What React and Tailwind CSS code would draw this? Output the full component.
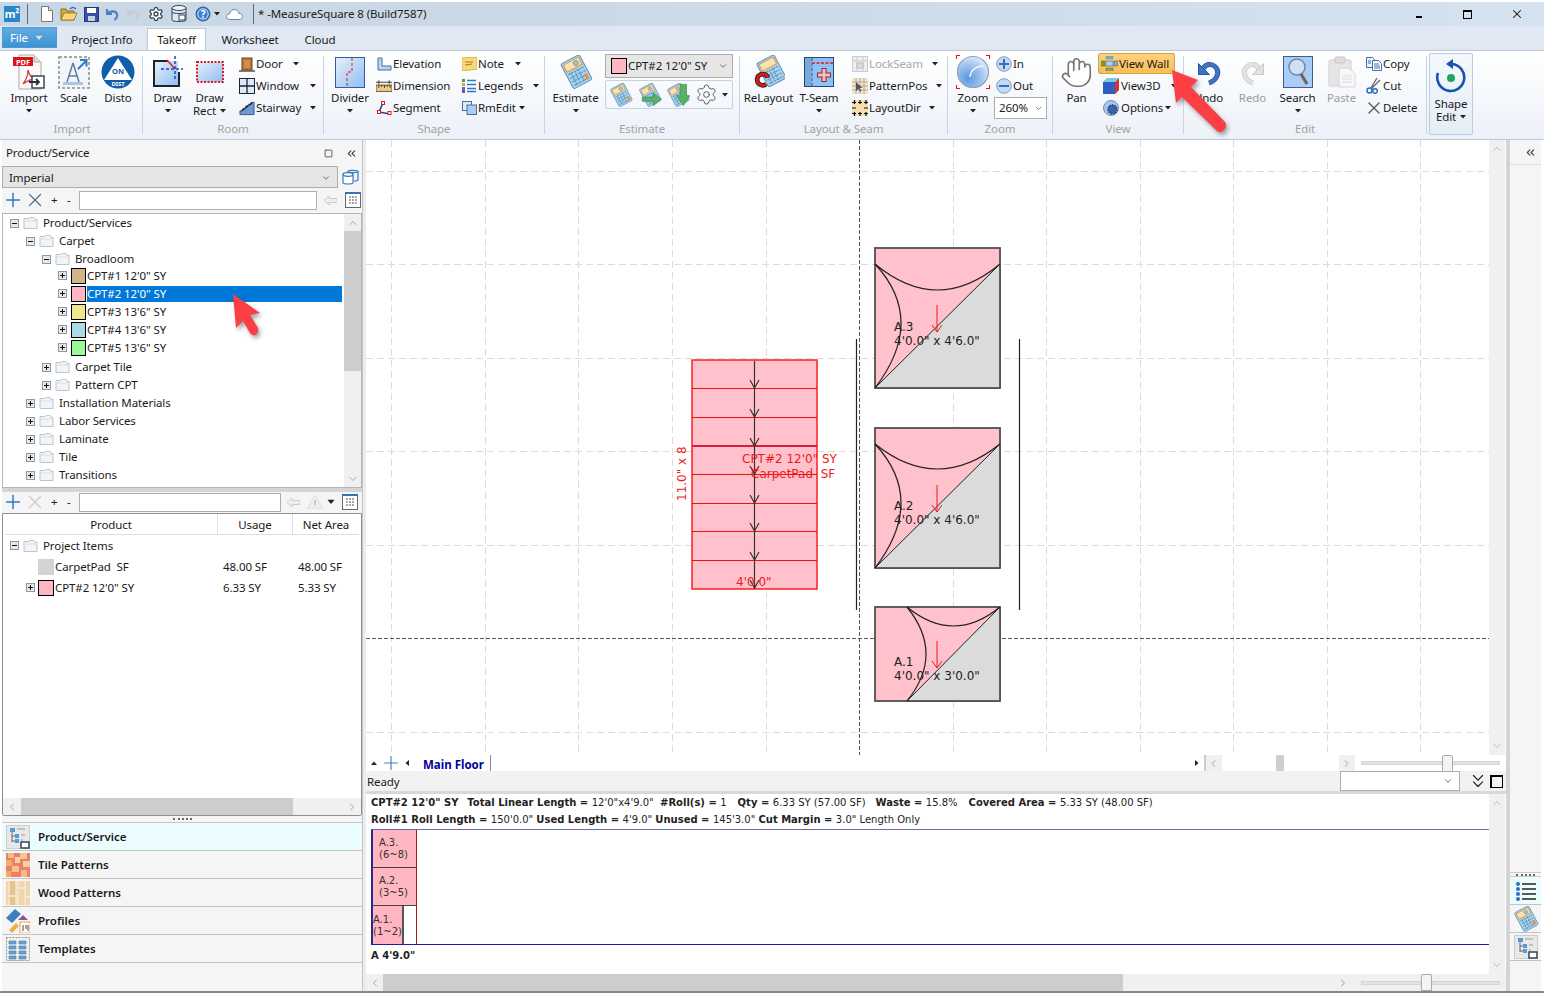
import { ChevronUp, ChevronDown, ChevronLeft, ChevronRight, ChevronsLeft, ChevronsDown, Hand, Plus, X, Square, Settings } from "lucide-react";

const Caret = ({ className = "" }) => (
  <svg width="6" height="4" viewBox="0 0 6 4" className={className}><path d="M0 0h6L3 3.500z" fill="#222" /></svg>
);

/* ---- small drawings for the quick access bar ---- */
const NewDoc = () => (
  <svg width="14" height="16" viewBox="0 0 14 16"><path d="M1.500.500h7l4 4v11h-11z" fill="#fff" stroke="#777" /><path d="M8.500.500v4h4" fill="#ddd" stroke="#777" /></svg>
);
const OpenFolder = () => (
  <svg width="18" height="16" viewBox="0 0 18 16"><path d="M1 3h5l1 2h7v9H1z" fill="#d9a93f" stroke="#8a6a20" /><path d="M1 14l3-7h13l-3 7z" fill="#f6d87c" stroke="#a57f28" /><path d="M10 3c2-2 4-2 6 0" fill="none" stroke="#3a6fb5" strokeWidth="1.500" /></svg>
);
const Floppy = () => (
  <svg width="15" height="15" viewBox="0 0 15 15"><rect x=".5" y=".5" width="14" height="14" fill="#3a4fa5" stroke="#27367a" /><rect x="3" y="1" width="9" height="5" fill="#fff" /><rect x="4" y="9" width="7" height="5" fill="#c9d0e6" /></svg>
);
const SmallUndo = ({ c = "#4a7fc0" }) => (
  <svg width="14" height="14" viewBox="0 0 14 14"><path d="M2 2v5h5M2.500 7C5 3.500 10.500 3.500 12 7c.8 2.500-.5 4.500-2.500 6" fill="none" stroke={c} strokeWidth="2.200" /></svg>
);
const DbLock = () => (
  <svg width="16" height="18" viewBox="0 0 16 18"><path d="M1 3v12c0 2 14 2 14 0V3" fill="#dfe7f1" stroke="#345" /><ellipse cx="8" cy="3" rx="7" ry="2.500" fill="#eef3f8" stroke="#345" /><path d="M1 7c0 2 14 2 14 0" fill="none" stroke="#345" /><rect x="8" y="10" width="6" height="5" fill="#fff" stroke="#345" /></svg>
);
const Help = () => (
  <svg width="16" height="16" viewBox="0 0 16 16"><circle cx="8" cy="8" r="7" fill="#3f7fd0" stroke="#2a5a9e" /><circle cx="8" cy="8" r="5.200" fill="none" stroke="#cfe0f5" /><text x="8" y="11.500" textAnchor="middle" fontSize="10" fontWeight="700" fill="#fff">?</text></svg>
);
const Cloud = () => (
  <svg width="17" height="11" viewBox="0 0 17 11"><path d="M4 10.500C1.500 10.500.5 9 .5 7.500S2 5 3.500 5C4 2.500 6 .5 8.500.5S12.500 2 13 4.500c2 0 3.500 1.300 3.500 3s-1.500 3-3.500 3z" fill="#fff" stroke="#5d85ad" /></svg>
);

/* ---- ribbon drawings ---- */
const PdfImport = () => (
  <svg width="34" height="36" viewBox="0 0 34 36">
    <path d="M7 1h15l7 7v27H7z" fill="#fafafa" stroke="#aaa" />
    <path d="M22 1v7h7" fill="#ddd" stroke="#aaa" />
    <rect x="1" y="3" width="20" height="9" fill="#d9141b" />
    <text x="11" y="10.500" textAnchor="middle" fontSize="7.500" fontWeight="700" fill="#fff">PDF</text>
    <path d="M11 30c3-4 5-10 5-14 1 5 4 8 8 9-4 0-9 2-13 5z" fill="none" stroke="#d9433f" strokeWidth="1.300" />
    <rect x="20" y="22" width="12" height="12" fill="#fff" stroke="#445" strokeWidth="1.500" />
    <path d="M17 28h10M24 25l3 3-3 3" fill="none" stroke="#234" strokeWidth="1.800" />
  </svg>
);
const ScaleIcon = () => (
  <svg width="32" height="33" viewBox="0 0 32 33">
    <rect x="1" y="1" width="30" height="31" fill="#f2f6fb" stroke="#8b8b8b" strokeDasharray="3 2" strokeWidth="1.500" />
    <path d="M15 7l-6 19M15 7l6 19M10 20h10" fill="none" stroke="#5f7f9f" strokeWidth="1.500" />
    <rect x="5" y="26" width="20" height="3" fill="#a9c7e8" />
    <path d="M20 13l8-8M22 4h6.500v6.500" fill="none" stroke="#2f78c8" strokeWidth="2" />
  </svg>
);
const Disto = () => (
  <svg width="34" height="34" viewBox="0 0 34 34">
    <circle cx="17" cy="17" r="16.500" fill="#0f5ea8" />
    <path d="M17 3L31 25H3z" fill="#fff" />
    <text x="17" y="19" textAnchor="middle" fontSize="7.500" fontWeight="700" fill="#0f5ea8">ON</text>
    <text x="17" y="31" textAnchor="middle" fontSize="6" fontWeight="700" fill="#fff">DIST</text>
  </svg>
);
const Draw = () => (
  <svg width="30" height="32" viewBox="0 0 30 32">
    <defs><linearGradient id="bl" x1="0" y1="0" x2="1" y2="1"><stop offset="0" stopColor="#e6f0fb" /><stop offset="1" stopColor="#8fbdf2" /></linearGradient></defs>
    <path d="M1 5h24v25H1z" fill="url(#bl)" />
    <path d="M15 5H1v25h25V16" fill="none" stroke="#222" strokeWidth="2" />
    <path d="M14 4l8 9" stroke="#e02020" strokeWidth="1.500" />
    <path d="M22 0v24M8 13h22" stroke="#1a49b0" strokeWidth="1.500" strokeDasharray="3 2" />
  </svg>
);
const DrawRect = () => (
  <svg width="28" height="22" viewBox="0 0 28 22"><rect x="1" y="1" width="26" height="20" fill="url(#bl)" stroke="#e01818" strokeWidth="2" strokeDasharray="2 1.500" /></svg>
);
const Door = () => (
  <svg width="16" height="15" viewBox="0 0 16 15"><rect x="3" y="1" width="10" height="12" fill="#b5763a" stroke="#6e4218" /><rect x="5" y="3" width="6" height="8" fill="#c98f52" /><path d="M0 14h16" stroke="#555" strokeWidth="1.500" /></svg>
);
const WindowIc = () => (
  <svg width="16" height="16" viewBox="0 0 16 16"><rect x=".5" y=".5" width="15" height="15" fill="#dcebfb" stroke="#223" /><path d="M8 0v16M0 8h16" stroke="#223" strokeWidth="1.300" /></svg>
);
const Stair = () => (
  <svg width="17" height="15" viewBox="0 0 17 15"><path d="M1 14V10h3V8h3V5h3V3h3V1h3v13z" fill="#6d9bd1" stroke="#2d5485" /><path d="M3 10l3-3M7 7l3-3M11 4l3-3" stroke="#222" strokeWidth="1.500" /></svg>
);
const Divider = () => (
  <svg width="30" height="31" viewBox="0 0 30 31"><rect x=".5" y=".5" width="29" height="30" fill="url(#bl)" stroke="#2b5f9e" /><path d="M17 1v14h-5v15" fill="none" stroke="#e01818" strokeDasharray="3 2" /></svg>
);
const Elevation = () => (
  <svg width="15" height="14" viewBox="0 0 15 14"><path d="M1 1h4v8h9v4H1z" fill="#bcd6f2" stroke="#3d6ea8" /></svg>
);
const Dimension = () => (
  <svg width="17" height="12" viewBox="0 0 17 12"><path d="M0 2h17M3 0v4M14 0v4" stroke="#333" /><rect x="0" y="5" width="17" height="7" fill="#e8c98a" stroke="#6a4d1a" /><path d="M3 5v3M6 5v2M9 5v3M12 5v2M15 5v3" stroke="#333" /></svg>
);
const Segment = () => (
  <svg width="15" height="14" viewBox="0 0 15 14"><path d="M6 2L2 11l11 2" fill="none" stroke="#1c3fae" strokeWidth="1.500" /><rect x="4.500" y=".5" width="3" height="3" fill="#fff" stroke="#e01818" /><rect x=".5" y="9.500" width="3" height="3" fill="#fff" stroke="#e01818" /><rect x="11" y="10.500" width="3" height="3" fill="#fff" stroke="#e01818" /></svg>
);
const Note = () => (
  <svg width="15" height="14" viewBox="0 0 15 14"><path d="M0 1l15-1v12l-15 2z" fill="#f6dc78" stroke="#d5b64a" /><path d="M3 5h8M3 8l7-1" stroke="#c46a2a" /></svg>
);
const Legends = () => (
  <svg width="14" height="14" viewBox="0 0 14 14"><rect x="0" y="0" width="3" height="3" fill="#3aa655" /><rect x="0" y="4" width="3" height="3" fill="#e6a420" /><rect x="0" y="8" width="3" height="3" fill="#3a7ad0" /><rect x="0" y="11" width="3" height="3" fill="#9a3ab0" /><path d="M5 1.500h9M5 5.500h9M5 9.500h9M5 12.500h9" stroke="#2f78c8" strokeWidth="1.500" /></svg>
);
const RmEdit = () => (
  <svg width="15" height="14" viewBox="0 0 15 14"><rect x=".5" y=".5" width="9" height="9" fill="#dbe9f8" stroke="#4a6f9a" /><rect x="5" y="4" width="9.500" height="9.500" fill="#a9cdf3" stroke="#4a6f9a" /></svg>
);
const Calc = ({ s = 34, extra }) => (
  <svg width={s} height={s} viewBox="0 0 34 34">
    <g transform="rotate(-28 17 17)">
      <rect x="7" y="3" width="21" height="28" rx="2" fill="#a9d3ee" stroke="#5c93bd" />
      <rect x="9" y="5" width="17" height="8" fill="#f8e2b0" stroke="#e09a3a" />
      <circle cx="21" cy="9" r="2.500" fill="#9fc3de" stroke="#678" strokeWidth=".6" />
      <path d="M9 16h17M9 20h17M9 24h17M9 28h17M12 15v14M16 15v14M20 15v14" stroke="#5c93bd" strokeWidth="1.300" strokeDasharray="2 1" />
      <rect x="23" y="23" width="3" height="6" fill="#e8923a" />
    </g>
    {extra === "right" && <path d="M6 20h16v-6l11 9-11 9v-6H6z" fill="#58b368" stroke="#3f8f50" />}
    {extra === "down" && <path d="M20 2h9v16h5l-9.500 14L15 18h5z" fill="#58b368" stroke="#3f8f50" />}
  </svg>
);
const ReLayout = () => (
  <svg width="32" height="34" viewBox="0 0 34 36">
    <g transform="translate(2 0)"><g transform="rotate(-28 17 17)"><rect x="7" y="3" width="21" height="28" rx="2" fill="#a9d3ee" stroke="#5c93bd" /><rect x="9" y="5" width="17" height="8" fill="#f8e2b0" stroke="#e09a3a" /><path d="M9 16h17M9 20h17M9 24h17M9 28h17M12 15v14M16 15v14M20 15v14" stroke="#5c93bd" strokeWidth="1.300" strokeDasharray="2 1" /></g></g>
    <path d="M16 24a6 6 0 1 0-2 7" fill="none" stroke="#222" strokeWidth="5" />
    <path d="M16 24a6 6 0 1 0-2 7" fill="none" stroke="#e01818" strokeWidth="3" />
  </svg>
);
const TSeam = () => (
  <svg width="30" height="30" viewBox="0 0 30 30">
    <rect x=".5" y=".5" width="29" height="29" fill="#8fc0f5" stroke="#234a7a" />
    <rect x="1" y="1" width="7" height="28" fill="#7aa8d8" />
    <path d="M8 1v28" stroke="#3a5f8f" strokeDasharray="3 2" />
    <path d="M8 6h22" stroke="#e01818" strokeWidth="1.500" strokeDasharray="3 1.500" />
    <path d="M20 11v14M13 18h14" stroke="#8a2a2a" strokeWidth="5" />
    <path d="M20 12v12M14 18h12" stroke="#fbb" strokeWidth="3" />
  </svg>
);
const LockSeam = () => (
  <svg width="16" height="16" viewBox="0 0 16 16"><rect x=".5" y=".5" width="15" height="15" fill="#eee" stroke="#ccc" /><path d="M5 1v14M11 1v14M1 5h14" stroke="#ccc" /><rect x="5" y="7" width="6" height="5" fill="#ddd" stroke="#bbb" /></svg>
);
const PatternPos = () => (
  <svg width="16" height="16" viewBox="0 0 16 16"><rect width="16" height="16" fill="#f3e6d2" /><path d="M4 0v16M8 0v16M12 0v16M0 4h16M0 8h16M0 12h16" stroke="#b9a68c" /><path d="M4 4v9l2.500-2 2 3 1-1-2-3h3z" fill="#556" /></svg>
);
const LayoutDir = () => (
  <svg width="16" height="16" viewBox="0 0 16 16"><rect width="16" height="16" fill="#f4dfae" /><path d="M0 2.500h4M2.500 0v4M6 2.500h4M8 0v4M12 2.500h4M14 0v4M0 8h4M12 8h4M0 13.500h4M2.500 12v4M6 13.500h4M8 12v4M12 13.500h4M14 12v4" stroke="#111" strokeWidth="1.200" /></svg>
);
const ZoomIc = () => (
  <svg width="34" height="34" viewBox="0 0 34 34">
    <defs><radialGradient id="gl" cx=".35" cy=".7" r=".8"><stop offset="0" stopColor="#5b96e0" /><stop offset=".6" stopColor="#a9c9ef" /><stop offset="1" stopColor="#eef4fb" /></radialGradient></defs>
    <circle cx="17" cy="17" r="15.500" fill="url(#gl)" stroke="#8ba3bd" strokeWidth="1.200" />
    <path d="M14 22C15 15 20 11 28 11" fill="none" stroke="#eef4fb" strokeWidth="1.500" />
    <path d="M0 4V0h4M30 0h4v4M0 30v4h4M30 34h4v-4" fill="none" stroke="#e01818" strokeWidth="2" />
  </svg>
);
const InOut = ({ plus }) => (
  <svg width="16" height="16" viewBox="0 0 16 16"><circle cx="8" cy="8" r="7.300" fill="#c4d9f2" stroke="#7f9cc4" /><path d={plus ? "M3 8h10M8 3v10" : "M3 8h10"} stroke="#2e6fc2" strokeWidth="2" /></svg>
);
const ViewWall = () => (
  <svg width="17" height="15" viewBox="0 0 17 15"><rect x="5" y="0" width="7" height="3" fill="#7fa8d8" stroke="#4a7" strokeWidth=".5" /><rect x="0" y="5" width="4" height="5" fill="#70a040" stroke="#4a6a20" strokeWidth=".5" /><rect x="13" y="5" width="4" height="5" fill="#7fa8d8" stroke="#456" strokeWidth=".5" /><rect x="5" y="5" width="7" height="5" fill="#a9cdf3" stroke="#456" strokeWidth=".5" /><rect x="5" y="12" width="7" height="3" fill="#8ab060" stroke="#4a6a20" strokeWidth=".5" /></svg>
);
const Cube = () => (
  <svg width="16" height="16" viewBox="0 0 16 16"><path d="M0 4l4-4h12v12l-4 4H0z" fill="#e8d33a" /><rect x="0" y="4" width="12" height="12" fill="#2f5fc0" /><path d="M12 4l4-4v12l-4 4z" fill="#d93030" /><path d="M0 4l4-4h12l-4 4z" fill="#6fd0e8" /></svg>
);
const Options = () => (
  <svg width="16" height="16" viewBox="0 0 16 16"><circle cx="8" cy="8" r="7.500" fill="#a9c4e8" stroke="#6f8fb5" /><circle cx="9.500" cy="9.500" r="4.500" fill="#3b64b0" stroke="#223f7a" strokeDasharray="1.500 1" strokeWidth="1.500" /></svg>
);
const UndoBig = ({ a, b, flip }) => (
  <svg width="24" height="25" viewBox="0 0 24 25" className={flip ? "-scale-x-100" : ""}>
    <path d="M12 23C21 20 23 11 18 6.500C14 3 9 4 6 8.500" fill="none" stroke={b} strokeWidth="5" />
    <path d="M12 23C21 20 23 11 18 6.500C14 3 9 4 6 8.500" fill="none" stroke={a} strokeWidth="3.600" />
    <path d="M1.500 3.500v11h11z" fill={a} stroke={b} />
  </svg>
);
const SearchIc = () => (
  <svg width="30" height="32" viewBox="0 0 30 32">
    <rect x=".5" y=".5" width="29" height="31" fill="#a9cdf8" stroke="#3e5f86" />
    <circle cx="14" cy="11" r="8" fill="#cfe0f5" stroke="#789" strokeWidth="1.500" />
    <path d="M18 18l6 10" stroke="#6d6350" strokeWidth="3" />
  </svg>
);
const PasteIc = () => (
  <svg width="28" height="32" viewBox="0 0 28 32">
    <rect x="1" y="4" width="22" height="26" rx="1" fill="#e6e6e6" stroke="#d0d0d0" />
    <rect x="7" y="1" width="10" height="6" rx="1" fill="#ddd" stroke="#c8c8c8" />
    <path d="M11 12h10l6 6v13H11z" fill="#f7f7f7" stroke="#d5d5d5" />
    <path d="M14 20h10M14 23h10M14 26h10" stroke="#ddd" />
  </svg>
);
const CopyIc = () => (
  <svg width="16" height="14" viewBox="0 0 16 14"><path d="M.5.500h6l2 2v8h-8z" fill="#eaf2fb" stroke="#3f70ad" /><path d="M6.500 3.500h6l3 3v7h-9z" fill="#fff" stroke="#3f70ad" /><path d="M8 7h5M8 9h6M8 11h6M2 4h3M2 6h3" stroke="#3f70ad" /></svg>
);
const CutIc = () => (
  <svg width="16" height="16" viewBox="0 0 16 16"><path d="M11 0L5 10M14 2L6 10" stroke="#667" strokeWidth="1.300" /><circle cx="3.500" cy="12.500" r="2.500" fill="none" stroke="#2f6fc0" strokeWidth="1.500" /><circle cx="9" cy="13" r="2.300" fill="none" stroke="#2f6fc0" strokeWidth="1.500" /><path d="M5 10l3 2" stroke="#2f6fc0" /></svg>
);
const ShapeEdit = () => (
  <svg width="32" height="34" viewBox="0 0 32 34">
    <path d="M17 5a13.500 13.500 0 1 1-14 9" fill="none" stroke="#1654ad" strokeWidth="2.600" />
    <path d="M18 0v10l-7-5z" fill="#1654ad" />
    <circle cx="16" cy="19" r="4" fill="#1aa85c" />
  </svg>
);

/* ---- panel drawings ---- */
const Folder = () => (
  <svg width="15" height="14" viewBox="0 0 15 14" className="shrink-0"><path d="M1 2.500h5l1-1h4l1 1v1h2v9H1z" fill="#f2f5f8" stroke="#bcc4cc" /><path d="M1 5h13" stroke="#d8dee4" /></svg>
);
const Expander = ({ open }) => (
  <svg width="9" height="9" viewBox="0 0 9 9" className="shrink-0"><rect x=".5" y=".5" width="8" height="8" fill="#e8e8e8" stroke="#8a98a8" /><path d={open ? "M2 4.500h5" : "M2 4.500h5M4.500 2v5"} stroke="#111" /></svg>
);
const GridBtn = () => (
  <svg width="16" height="16" viewBox="0 0 16 16"><rect x=".5" y=".5" width="15" height="15" fill="#fff" stroke="#667" /><rect x="0" y="0" width="16" height="2" fill="#3a70b5" /><path d="M4 5h2M7 5h2M10 5h2M4 8h2M7 8h2M10 8h2M4 11h2M7 11h2M10 11h2" stroke="#555" strokeWidth="1.200" /></svg>
);
const BackArrow = () => (
  <svg width="13" height="11" viewBox="0 0 13 11"><path d="M0 5.500L5 1v2.500h8v4H5V10z" fill="#eee" stroke="#ccc" /></svg>
);
const DbIcon = () => (
  <svg width="17" height="16" viewBox="0 0 17 16" fill="none" stroke="#2f78c0" strokeWidth="1.200"><path d="M6 3v-.500C6 1 16 1 16 2.500v8c0 1-2 1.500-4 1.500" /><path d="M6 2.500c0 1.500 10 1.500 10 0" /><path d="M1 5.500v8c0 2 10 2 10 0v-8" fill="#fff" /><ellipse cx="6" cy="5.500" rx="5" ry="1.800" fill="#fff" /></svg>
);
const ProdIcon = () => (
  <svg width="24" height="24" viewBox="0 0 24 24"><rect x=".5" y=".5" width="23" height="23" fill="#e8e8e8" stroke="#ccc" /><rect x="4" y="3" width="5" height="4" fill="#5b9bd5" /><path d="M6 7v10M6 11h4M6 16h4" stroke="#667" /><rect x="9" y="9" width="4" height="4" fill="#5b9bd5" /><rect x="9" y="14" width="4" height="4" fill="#5b9bd5" /><path d="M11 4h8M15 10h4M15 15h2" stroke="#999" /><path d="M15 17h8v6h-8z" fill="#fff" stroke="#345" strokeWidth="1.500" /></svg>
);
const TileIcon = () => (
  <svg width="24" height="24" viewBox="0 0 24 24"><rect width="24" height="24" fill="#f07a74" /><rect x="2" y="0" width="6" height="5" fill="#eec077" /><rect x="14" y="0" width="7" height="6" fill="#efc98a" /><rect x="0" y="7" width="6" height="6" fill="#e9b25f" /><rect x="9" y="4" width="5" height="6" fill="#f4d79e" /><rect x="17" y="8" width="7" height="6" fill="#f2d597" /><rect x="6" y="13" width="7" height="6" fill="#f2c87d" /><rect x="0" y="18" width="5" height="6" fill="#e9b25f" /><rect x="15" y="17" width="6" height="7" fill="#eec077" /></svg>
);
const WoodIcon = () => (
  <svg width="24" height="24" viewBox="0 0 24 24"><rect width="24" height="24" fill="#f0d6ac" /><rect x="3" width="7" height="24" fill="#e8c48e" /><path d="M3 0v24M10 0v24M12 0v24M19 0v24" stroke="#f7ecd8" strokeWidth="1.200" /><path d="M3 15h7M12 7h7M19 16h5" stroke="#f7ecd8" strokeWidth="1.500" /></svg>
);
const ProfileIcon = () => (
  <svg width="24" height="24" viewBox="0 0 24 24"><path d="M0 9L9 0l6 5-9 9z" fill="#3f7cc0" /><path d="M12 11l5-5 5 5z" fill="#8f4fa5" /><path d="M3 21l7-7 3 3-7 7z" fill="#e9b04f" /><rect x="14" y="13" width="10" height="11" fill="#fff" stroke="#e9a23f" /><path d="M17 16v6M20 16v4M22 16v6" stroke="#444" /></svg>
);
const TemplIcon = () => (
  <svg width="24" height="24" viewBox="0 0 24 24"><rect x=".5" y=".5" width="23" height="23" fill="#f0f0f0" stroke="#999" strokeDasharray="2 1" /><path d="M3 4h7v3H3zM3 9h7v3H3zM3 14h7v3H3zM3 19h7v3H3zM13 4h7v3h-7zM13 9h7v3h-7zM13 14h7v3h-7zM13 19h7v3h-7z" fill="#6aa2cf" stroke="#4a7da8" strokeWidth=".6" /></svg>
);
const ListIcon = () => (
  <svg width="22" height="22" viewBox="0 0 22 22"><circle cx="3" cy="4" r="2" fill="#2f6fc0" /><circle cx="3" cy="9" r="2" fill="#2f6fc0" /><circle cx="3" cy="14" r="2" fill="#2f6fc0" /><circle cx="3" cy="19" r="2" fill="#2f6fc0" /><path d="M7 4h14M7 9h14M7 14h14M7 19h14" stroke="#222" strokeWidth="1.300" /></svg>
);

/* ---- ribbon pieces ---- */
const BigBtn = ({ w, icon, label, line2, arrow, muted }) => (
  <div className={`${w} shrink-0 flex flex-col items-center ${muted ? "text-[#9b9b9b]" : ""}`}>
    <div className="h-[38px] flex items-center justify-center">{icon}</div>
    <div className="h-[13px] leading-[13px] whitespace-nowrap">{label}</div>
    {line2 ? (
      <div className="h-[13px] leading-[13px] flex items-center gap-1">{line2}{arrow && <Caret />}</div>
    ) : arrow ? (
      <div className="h-[13px] flex items-center"><Caret /></div>
    ) : null}
  </div>
);

const SmallBtn = ({ icon, label, arrowW, muted }) => (
  <div className={`h-[22px] flex items-center whitespace-nowrap ${muted ? "text-[#a8a8a8]" : ""}`}>
    <div className="w-[16px] shrink-0 flex justify-center mr-[1px]">{icon}</div>
    <span className={arrowW}>{label}</span>
    {arrowW && <Caret />}
  </div>
);

const Group = ({ w, label, children }) => (
  <>
    <div className={`${w} shrink-0 flex flex-col`}>
      <div className="h-[69px] flex">{children}</div>
      <div className="h-[14px] leading-[14px] text-center text-[#a2a2a2]">{label}</div>
    </div>
    <div className="w-px h-[78px] mt-[3px] shrink-0 bg-[#c9d4e0]" />
  </>
);

const Ribbon = () => (
  <div className="h-[90px] shrink-0 flex pt-[2px] border-y border-[#bcc7d3] bg-gradient-to-b from-[#ffffff] to-[#ecf1f8] pl-[2px]">
    <Group w="w-[140px]" label="Import">
      <div className="w-[5px]" />
      <BigBtn w="w-[44px]" icon={<PdfImport />} label="Import" arrow />
      <BigBtn w="w-[45px]" icon={<ScaleIcon />} label="Scale" />
      <BigBtn w="w-[44px]" icon={<Disto />} label="Disto" />
    </Group>
    <Group w="w-[180px]" label="Room">
      <div className="w-[5px]" />
      <BigBtn w="w-[39px]" icon={<Draw />} label="Draw" arrow />
      <BigBtn w="w-[45px]" icon={<DrawRect />} label="Draw" line2="Rect" arrow />
      <div className="ml-[7px] flex flex-col">
        <SmallBtn icon={<Door />} label="Door" arrowW="w-[37px]" />
        <SmallBtn icon={<WindowIc />} label="Window" arrowW="w-[54px]" />
        <SmallBtn icon={<Stair />} label="Stairway" arrowW="w-[54px]" />
      </div>
    </Group>
    <Group w="w-[220px]" label="Shape">
      <div className="w-[4px]" />
      <BigBtn w="w-[44px]" icon={<Divider />} label="Divider" arrow />
      <div className="ml-[4px] w-[85px] flex flex-col">
        <SmallBtn icon={<Elevation />} label="Elevation" />
        <SmallBtn icon={<Dimension />} label="Dimension" />
        <SmallBtn icon={<Segment />} label="Segment" />
      </div>
      <div className="flex flex-col">
        <SmallBtn icon={<Note />} label="Note" arrowW="w-[37px]" />
        <SmallBtn icon={<Legends />} label="Legends" arrowW="w-[55px]" />
        <SmallBtn icon={<RmEdit />} label="RmEdit" arrowW="w-[41px]" />
      </div>
    </Group>
    <Group w="w-[194px]" label="Estimate">
      <div className="w-[6px]" />
      <BigBtn w="w-[49px]" icon={<Calc />} label="Estimate" arrow />
      <div className="ml-[5px] mt-[1px] w-[128px] flex flex-col gap-[2px]">
        <div className="h-[24px] flex items-center bg-[#e6e6e6] border border-[#adadad] pl-[5px] pr-[4px]">
          <span className="w-[16px] h-[16px] bg-[#ffb6c1] border border-black mr-px shrink-0" />
          <span className="flex-1 whitespace-nowrap">CPT#2 12'0" SY</span>
          <ChevronDown size={10} color="#555" />
        </div>
        <div className="h-[29px] flex items-center justify-between border border-[#c5d2e3] rounded-[2px] px-[3px]">
          <Calc s={24} />
          <Calc s={24} extra="right" />
          <Calc s={24} extra="down" />
          <Settings size={23} strokeWidth={1} color="#555" />
          <Caret className="mr-[1px]" />
        </div>
      </div>
    </Group>
    <Group w="w-[207px]" label="Layout & Seam">
      <div className="w-[1px]" />
      <BigBtn w="w-[55px]" icon={<ReLayout />} label="ReLayout" />
      <BigBtn w="w-[46px]" icon={<TSeam />} label="T-Seam" arrow />
      <div className="ml-[10px] flex flex-col">
        <SmallBtn muted icon={<LockSeam />} label="LockSeam" arrowW="w-[63px]" />
        <SmallBtn icon={<PatternPos />} label="PatternPos" arrowW="w-[67px]" />
        <SmallBtn icon={<LayoutDir />} label="LayoutDir" arrowW="w-[60px]" />
      </div>
    </Group>
    <Group w="w-[104px]" label="Zoom">
      <div className="w-[2px]" />
      <BigBtn w="w-[46px]" icon={<ZoomIc />} label="Zoom" arrow />
      <div className="flex flex-col">
        <SmallBtn icon={<InOut plus />} label="In" />
        <SmallBtn icon={<InOut />} label="Out" />
        <div className="h-[22px] w-[53px] -ml-[2px] flex items-center bg-white border border-[#adadad] pl-[4px] pr-[3px] justify-between">
          260% <ChevronDown size={9} color="#555" />
        </div>
      </div>
    </Group>
    <Group w="w-[130px]" label="View">
      <div className="w-[4px]" />
      <BigBtn w="w-[39px]" icon={<Hand size={33} strokeWidth={1.200} color="#777" fill="#fff" />} label="Pan" />
      <div className="ml-[2px] flex flex-col">
        <div className="h-[21px] w-[77px] flex items-center bg-gradient-to-b from-[#fdd27d] to-[#fbbd55] border border-[#d7a244] rounded-[2px] pl-[2px] gap-[1px] whitespace-nowrap">
          <ViewWall />
          View Wall
        </div>
        <div className="h-[22px] mt-[1px] pl-[5px] flex items-center gap-[2px]">
          <Cube />
          <span className="w-[48px]">View3D</span>
          <Caret />
        </div>
        <div className="h-[22px] pl-[5px] flex items-center gap-[2px]">
          <Options />
          <span className="w-[42px]">Options</span>
          <Caret />
        </div>
      </div>
    </Group>
    <Group w="w-[242px]" label="Edit">
      <div className="w-[3px]" />
      <BigBtn w="w-[43px]" icon={<UndoBig a="#3f73c4" b="#2a5596" />} label="Undo" />
      <BigBtn muted w="w-[45px]" icon={<UndoBig flip a="#e2e2e2" b="#c8c8c8" />} label="Redo" />
      <BigBtn w="w-[45px]" icon={<SearchIc />} label="Search" arrow />
      <BigBtn muted w="w-[43px]" icon={<PasteIc />} label="Paste" />
      <div className="ml-[3px] flex flex-col">
        <SmallBtn icon={<CopyIc />} label="Copy" />
        <SmallBtn icon={<CutIc />} label="Cut" />
        <SmallBtn icon={<X size={20} strokeWidth={1.500} color="#555" className="shrink-0" />} label="Delete" />
      </div>
    </Group>
    <div className="ml-[2px] w-[44px] h-[82px] flex flex-col items-center border border-[#b8cce4] rounded-[2px] bg-gradient-to-b from-[#f4f8fd] to-[#e6edf6]">
      <div className="h-[39px] flex items-end"><ShapeEdit /></div>
      <div className="h-[13px] mt-[4px] leading-[13px]">Shape</div>
      <div className="h-[13px] leading-[13px] flex items-center gap-1">Edit <Caret /></div>
    </div>
  </div>
);

const TitleBar = () => (
  <div className="h-[24px] mt-[2px] shrink-0 flex items-center bg-gradient-to-r from-[#c8d7e5] via-[#cddae7] to-[#d5e2ef] pl-[4px] pr-[20px]">
    <div className="w-[16px] h-[16px] bg-[#2a86c9] text-white flex items-center justify-center text-[11px] font-bold">m²</div>
    <div className="w-px h-[20px] bg-[#667] ml-[7px] mr-[12px]" />
    <div className="flex items-center gap-[6px]">
      <NewDoc />
      <OpenFolder />
      <Floppy />
      <SmallUndo />
      <div className="ml-[1px]"><SmallUndo c="#c4ccd4" /></div>
      <Settings size={16} color="#345" fill="#fff" className="ml-[2px]" />
      <div className="ml-[1px]"><DbLock /></div>
      <div className="ml-[2px]"><Help /></div>
      <Caret className="-ml-[3px]" />
      <Cloud />
    </div>
    <div className="w-px h-[20px] bg-[#667] ml-[10px] mr-[4px]" />
    <span className="text-[#222]">* -MeasureSquare 8 (Build7587)</span>
    <div className="ml-auto flex items-center">
      <div className="w-[6px] h-[2px] bg-black mt-[5px] mr-[41px]" />
      <div className="w-[9px] h-[9px] border border-black border-t-2 mr-[38px]" />
      <X size={14} strokeWidth={1.800} color="#111" />
    </div>
  </div>
);

const Tabs = () => (
  <div className="h-[24px] shrink-0 flex items-end bg-[#dfe8f3] pl-[2px]">
    <div className="w-[55px] h-[21px] mb-[2px] flex items-center pl-[7px] gap-[8px] bg-gradient-to-b from-[#62abe0] to-[#3b93d4] border border-[#4f9ad2] text-white">
      File <Caret className="invert scale-125" />
    </div>
    <div className="w-[90px] text-center h-[22px] leading-[24px]">Project Info</div>
    <div className="w-[59px] h-[23px] leading-[21px] -mb-px text-center bg-white border-x border-t border-[#bcc7d3]">Takeoff</div>
    <div className="w-[88px] text-center h-[22px] leading-[24px]">Worksheet</div>
    <div className="w-[52px] text-center h-[22px] leading-[24px]">Cloud</div>
  </div>
);

/* ---- left panel ---- */
const indent = ["pl-[7px]", "pl-[23px]", "pl-[39px]", "pl-[55px]"];
const tree = [
  { lvl: 0, open: true, label: "Product/Services" },
  { lvl: 1, open: true, label: "Carpet" },
  { lvl: 2, open: true, label: "Broadloom" },
  { lvl: 3, swatch: "bg-[#d2b48c]", label: `CPT#1 12'0" SY` },
  { lvl: 3, swatch: "bg-[#ffb6c1]", label: `CPT#2 12'0" SY`, sel: true },
  { lvl: 3, swatch: "bg-[#f0e68c]", label: `CPT#3 13'6" SY` },
  { lvl: 3, swatch: "bg-[#add8e6]", label: `CPT#4 13'6" SY` },
  { lvl: 3, swatch: "bg-[#98fb98]", label: `CPT#5 13'6" SY` },
  { lvl: 2, label: "Carpet Tile" },
  { lvl: 2, label: "Pattern CPT" },
  { lvl: 1, label: "Installation Materials" },
  { lvl: 1, label: "Labor Services" },
  { lvl: 1, label: "Laminate" },
  { lvl: 1, label: "Tile" },
  { lvl: 1, label: "Transitions" },
  { lvl: 1, label: "", hideBox: true },
];

const TreeRow = ({ row }) => (
  <div className={`h-[18px] shrink-0 flex ${row.swatch ? "items-start" : "items-center"} ${indent[row.lvl]}`}>
    {row.hideBox ? <div className="w-[9px]" /> : <div className={row.swatch ? "mt-[3px]" : "flex"}><Expander open={row.open} /></div>}
    <div className="ml-[4px]">
      {row.swatch ? (
        <div className={`w-[15px] h-[16px] border border-black ${row.swatch}`} />
      ) : (
        <Folder />
      )}
    </div>
    {row.swatch ? (
      <div className={`ml-px flex-1 h-[16px] leading-[16px] ${row.sel ? "bg-[#0078d7] text-white" : ""}`}>{row.label}</div>
    ) : (
      <span className="ml-[5px]">{row.label}</span>
    )}
  </div>
);

const Toolbar = ({ input, muted, children }) => (
  <div className="flex items-center">
    <Plus size={22} strokeWidth={1.600} color="#2f78c0" className="shrink-0" />
    <X size={22} strokeWidth={1.400} color={muted ? "#ccc" : "#5b6f85"} className="shrink-0" />
    <span className="ml-[5px] w-[16px]">+</span>
    <span className="w-[12px]">-</span>
    <div className={`${input} h-[19px] bg-white border border-[#adadad]`} />
    {children}
  </div>
);

const NavRow = ({ icon, label, active }) => (
  <div className={`h-[28px] shrink-0 flex items-center pl-[4px] border-b border-[#c3c3cc] font-semibold tracking-normal ${active ? "bg-[#ecfdff]" : ""}`}>
    <div className="w-[24px] flex justify-center">{icon}</div>
    <span className="ml-[8px]">{label}</span>
  </div>
);

const LeftPanel = () => (
  <div className="w-[360px] ml-[2px] shrink-0 flex flex-col bg-[#f5f5f5]">
    <div className="h-[26px] flex items-center pl-[4px] pr-[4px]">
      <span className="flex-1">Product/Service</span>
      <Square size={9} color="#333" className="mr-[12px]" />
      <ChevronsLeft size={13} color="#444" />
    </div>
    <div className="h-[23px] flex items-start">
      <div className="w-[336px] h-[22px] flex items-center justify-between bg-[#e5e5e5] border border-[#adadad] pt-[1px] pl-[6px] pr-[6px]">
        Imperial <ChevronDown size={10} color="#555" />
      </div>
      <div className="ml-[4px] mt-[3px]"><DbIcon /></div>
    </div>
    <div className="h-[24px]">
      <Toolbar input="w-[238px]">
        <div className="ml-[7px]"><BackArrow /></div>
        <div className="ml-[8px]"><GridBtn /></div>
      </Toolbar>
    </div>
    <div className="h-[275px] flex bg-white border border-[#b5b5b5] overflow-hidden">
      <div className="flex-1 mr-[2px] flex flex-col">
        {tree.map((row, i) => <TreeRow key={i} row={row} />)}
      </div>
      <div className="w-[17px] shrink-0 flex flex-col bg-[#f0f0f0]">
        <div className="h-[17px] flex items-center justify-center"><ChevronUp size={12} color="#aaa" /></div>
        <div className="h-[140px] bg-[#cdcdcd]" />
        <div className="flex-1" />
        <div className="h-[17px] flex items-center justify-center"><ChevronDown size={12} color="#aaa" /></div>
      </div>
    </div>
    <div className="h-[4px] bg-[#d4d4d4]" />
    <div className="h-[21px]">
      <div className="-mt-[1px]">
        <Toolbar input="w-[202px]" muted>
          <div className="ml-[6px]"><BackArrow /></div>
          <svg width="16" height="14" viewBox="0 0 16 14" className="ml-[7px]"><path d="M8 0l8 14H0z" fill="#eee" stroke="#ddd" /><path d="M8 5v5" stroke="#ccc" strokeWidth="2" /></svg>
          <Caret className="ml-[5px] scale-125" />
          <div className="ml-[8px]"><GridBtn /></div>
        </Toolbar>
      </div>
    </div>
    <div className="h-[303px] flex flex-col bg-white border border-[#8f8f8f] rounded-b-[2px]">
      <div className="h-[21px] flex items-center border-b border-[#e0e0e0] shrink-0 mx-[2px]">
        <div className="w-[213px] text-center border-r border-[#e0e0e0] h-full leading-[21px]">Product</div>
        <div className="w-[75px] text-center border-r border-[#e0e0e0] h-full leading-[21px]">Usage</div>
        <div className="flex-1 text-center leading-[21px]">Net Area</div>
      </div>
      <div className="h-[21px] flex items-center pl-[7px]">
        <Expander open />
        <div className="ml-[4px]"><Folder /></div>
        <span className="ml-[5px]">Project Items</span>
      </div>
      <div className="h-[21px] flex items-center">
        <div className="w-[214px] flex items-center pl-[35px]">
          <div className="w-[16px] h-[16px] bg-[#d3d3d3]" />
          <span className="ml-px whitespace-pre">CarpetPad  SF</span>
        </div>
        <div className="w-[75px] pl-[6px]">48.00 SF</div>
        <div className="pl-[6px]">48.00 SF</div>
      </div>
      <div className="h-[21px] flex items-center">
        <div className="w-[214px] flex items-center pl-[23px]">
          <Expander />
          <div className="ml-[3px] w-[16px] h-[16px] bg-[#ffb6c1] border border-black" />
          <span className="ml-px">CPT#2 12'0" SY</span>
        </div>
        <div className="w-[75px] pl-[6px]">6.33 SY</div>
        <div className="pl-[6px]">5.33 SY</div>
      </div>
      <div className="flex-1" />
      <div className="h-[17px] flex bg-[#f0f0f0] items-center shrink-0">
        <ChevronLeft size={12} color="#aaa" className="mx-[3px]" />
        <div className="w-[272px] h-full bg-[#cdcdcd]" />
        <div className="flex-1" />
        <ChevronRight size={12} color="#aaa" className="mx-[3px]" />
      </div>
    </div>
    <div className="h-[7px] flex items-center justify-center border-b border-[#c3c3cc]">
      <div className="w-[19px] border-t-2 border-dotted border-[#666]" />
    </div>
    <NavRow active icon={<ProdIcon />} label="Product/Service" />
    <NavRow icon={<TileIcon />} label="Tile Patterns" />
    <NavRow icon={<WoodIcon />} label="Wood Patterns" />
    <NavRow icon={<ProfileIcon />} label="Profiles" />
    <NavRow icon={<TemplIcon />} label="Templates" />
    <div className="flex-1" />
  </div>
);

/* ---- canvas ---- */
const gridX = [391, 485, 578, 672, 766, 953, 1046, 1140, 1233, 1327, 1420];
const gridY = [171, 264, 358, 451, 545, 732];
const rollY = [388.5, 417.5, 474.5, 503.5, 531.5, 560.5];
const arrowY = [388, 417, 446, 474, 503, 531, 560, 588];

const Piece = ({ y, h, cutX, archY, sagY, bulgeX, midY, name, dims, arrowTop, textY }) => {
  const bottom = y + h;
  return (
    <g>
      <rect x="875" y={y} width="125" height={h} fill="#ffc1cc" stroke="#555" strokeWidth="1.500" />
      <path d={`M${cutX} ${bottom}L1000 ${archY}V${bottom}Z`} fill="#dbdbdb" stroke="#222" strokeWidth="1" />
      <rect x="875" y={y} width="125" height={h} fill="none" stroke="#555" strokeWidth="1.500" />
      <path d={`M${cutX} ${archY}Q${(cutX + 1000) / 2} ${2 * sagY - archY} 1000 ${archY}`} fill="none" stroke="#222" strokeWidth="1.200" />
      <path d={`M${cutX} ${archY}Q${2 * bulgeX - cutX} ${midY} ${cutX} ${bottom}`} fill="none" stroke="#222" strokeWidth="1.200" />
      <path d={`M937 ${arrowTop}V${arrowTop + 27}M932 ${arrowTop + 20}L937 ${arrowTop + 27}L942 ${arrowTop + 20}`} fill="none" stroke="#f01818" strokeWidth="1" />
      <text x="894" y={textY} fontSize="12" fill="#222">{name}</text>
      <text x="894" y={textY + 14} fontSize="12" fill="#222">{dims}</text>
    </g>
  );
};

const Canvas = () => (
  <svg width="1123" height="615" viewBox="366 140 1123 615" className="block bg-white shrink-0 font-['DejaVu_Sans',sans-serif] tracking-normal">
    {gridX.map((x) => <line key={x} x1={x + 0.5} x2={x + 0.5} y1="140" y2="755" stroke="#dcdcdc" strokeDasharray="7 4" />)}
    {gridY.map((y) => <line key={y} y1={y + 0.5} y2={y + 0.5} x1="366" x2="1489" stroke="#dcdcdc" strokeDasharray="7 4" />)}
    <line x1="859.5" x2="859.5" y1="140" y2="755" stroke="#555" strokeDasharray="4 2" />
    <line y1="638.5" y2="638.5" x1="366" x2="1489" stroke="#555" strokeDasharray="4 2" />
    <line x1="856.5" x2="856.5" y1="339" y2="610" stroke="#222" strokeWidth="1.200" />
    <line x1="1019.5" x2="1019.5" y1="339" y2="610" stroke="#222" strokeWidth="1.200" />

    <rect x="692" y="360" width="125" height="229" fill="#ffc1cc" stroke="#f82020" strokeWidth="1.500" />
    {rollY.map((y) => <line key={y} x1="692" x2="817" y1={y} y2={y} stroke="#f01010" strokeWidth="1.100" />)}
    <line x1="692" x2="817" y1="446" y2="446" stroke="#d81c40" strokeWidth="1.800" />
    <line x1="754.5" x2="754.5" y1="361" y2="589" stroke="#333" strokeWidth="1.200" />
    {arrowY.map((y) => <path key={y} d={`M750 ${y - 8}L754.500 ${y}L759 ${y - 8}`} fill="none" stroke="#333" strokeWidth="1.200" />)}
    <path d="M750 466L754.500 472L759 466" fill="none" stroke="#f01818" />
    <text x="742" y="463" fontSize="12" fill="#f01818" xmlSpace="preserve">CPT#2 12'0" SY</text>
    <text x="751" y="478" fontSize="12" fill="#f01818" xmlSpace="preserve">CarpetPad  SF</text>
    <text x="736" y="586" fontSize="12" fill="#f01818">4'0.0"</text>
    <text x="686" y="501" fontSize="12" fill="#f01818" transform="rotate(-90 686 501)">11.0" x 8</text>

    <Piece y={248} h={140} cutX={875} archY={264} sagY={290} bulgeX={901} midY={320} name="A.3" dims={`4'0.0" x 4'6.0"`} arrowTop={305} textY={331} />
    <Piece y={428} h={140} cutX={875} archY={444} sagY={469} bulgeX={901} midY={500} name="A.2" dims={`4'0.0" x 4'6.0"`} arrowTop={485} textY={510} />
    <Piece y={607} h={94} cutX={907} archY={607} sagY={626} bulgeX={926} midY={654} name="A.1" dims={`4'0.0" x 3'0.0"`} arrowTop={641} textY={666} />
  </svg>
);

const VScroll = ({ h }) => (
  <div className={`w-[16px] ${h} shrink-0 flex flex-col justify-between items-center bg-[#f0f0f0]`}>
    <ChevronUp size={12} color="#bbb" className="mt-[3px]" />
    <ChevronDown size={12} color="#bbb" className="mb-[3px]" />
  </div>
);

const Slider = ({ thumb }) => (
  <div className="ml-[6px] w-[139px] flex items-center">
    <div className={`${thumb} h-[4px] bg-[#dfe5e3] border border-[#d0d6d4]`} />
    <div className="w-[11px] h-[17px] bg-[#f4f4f4] border border-[#aaa] rounded-t-[2px]" />
    <div className="flex-1 h-[4px] bg-[#dfe5e3] border border-[#d0d6d4]" />
  </div>
);

const b = "font-bold";
const CenterColumn = () => (
  <div className="w-[1140px] shrink-0 flex flex-col">
    <div className="flex"><Canvas /><VScroll h="h-[615px]" /><div className="flex-1 bg-white" /></div>

    <div className="h-[16px] flex items-center bg-white pl-[5px] pr-[6px]">
      <Caret className="rotate-180" />
      <Plus size={22} strokeWidth={1.300} color="#3d86d0" className="ml-[3px] shrink-0" />
      <Caret className="ml-[2px] rotate-90" />
      <span className="ml-[13px] w-[68px] h-full font-bold tracking-normal text-[#00009c] border-r border-[#888] leading-[19px] whitespace-nowrap">Main Floor</span>
      <Caret className="ml-auto -rotate-90" />
      <div className="ml-[4px] w-[151px] h-[16px] flex items-center">
        <div className="w-[18px] h-full bg-[#f0f0f0] border-l-2 border-[#cdcdcd] flex items-center"><ChevronLeft size={11} color="#999" className="ml-[2px]" /></div>
        <div className="w-[54px] h-full" />
        <div className="w-[8px] h-full bg-[#cdcdcd]" />
        <div className="flex-1 h-full" />
        <div className="w-[16px] h-full bg-[#f0f0f0] flex items-center"><ChevronRight size={11} color="#999" className="ml-[2px]" /></div>
      </div>
      <Slider thumb="w-[81px]" />
    </div>

    <div className="h-[20px] flex items-center bg-[#f2f2f2] pl-px">
      <span className="flex-1 pt-[2px]">Ready</span>
      <div className="w-[120px] h-[20px] flex items-center justify-end pr-[6px] bg-white border border-[#adadad]"><ChevronDown size={10} color="#555" /></div>
      <ChevronsDown size={22} strokeWidth={1.200} className="ml-[7px] shrink-0" />
      <div className="w-[13px] h-[13px] ml-[1px] mr-[3px] border border-black border-t-2 border-l-2" />
    </div>
    <div className="h-[3px] bg-[#d8d8d8]" />

    <div className="h-[180px] flex bg-white">
      <div className="w-[1123px] shrink-0 flex flex-col pl-[5px] font-['DejaVu_Sans',sans-serif] text-[10px] tracking-normal text-[#222] whitespace-pre">
        <div className="h-[17px] mt-px leading-[16px]"><span className={b}>CPT#2 12'0" SY</span><span className={`${b} ml-[2px]`}>  Total Linear Length = </span>12'0"x4'9.0"  <span className={b}>#Roll(s) = </span>1<span className={`${b} ml-[4px]`}>  Qty = </span>6.33 SY (57.00 SF)<span className={`${b} ml-[3px]`}>  Waste = </span>15.8%<span className={`${b} ml-[4px]`}>  Covered Area = </span>5.33 SY (48.00 SF)</div>
        <div className="h-[17px] leading-[16px]"><span className={b}>Roll#1 Roll Length = </span>150'0.0" <span className={b}>Used Length = </span>4'9.0" <span className={b}>Unused = </span>145'3.0" <span className={b}>Cut Margin = </span>3.0" Length Only</div>
        <div className="h-[116px] flex border-t border-t-[#6868b4] border-b border-b-[#1c1ca8] border-l-2 border-l-[#2a2a88]">
          <div className="w-[44px] flex flex-col border-r border-[#b01818] text-[#333] leading-[12px]">
            <div className="h-[38px] bg-[#ffb6c1] border-b border-[#444] pl-[6px] pt-[7px]">A.3.<br />(6~8)</div>
            <div className="h-[38px] bg-[#ffb6c1] border-b border-[#444] pl-[6px] pt-[7px]">A.2.<br />(3~5)</div>
            <div className="flex-1 w-[31px] bg-[#ffb6c1] border-r-2 border-[#555] pt-[8px]">A.1.<br />(1~2)</div>
          </div>
        </div>
        <div className="mt-[4px] font-bold leading-[14px]">A 4'9.0"</div>
      </div>
      <VScroll h="h-[180px]" />
    </div>

    <div className="h-[17px] flex items-center bg-[#f0f0f0] pr-[6px]">
      <div className="w-[17px] flex justify-center"><ChevronLeft size={12} color="#aaa" /></div>
      <div className="w-[740px] h-full bg-[#cdcdcd]" />
      <ChevronRight size={12} color="#999" className="ml-auto" />
      <div className="w-[6px]" />
      <Slider thumb="w-[60px]" />
    </div>
  </div>
);

const RightPanel = () => (
  <div className="w-[31px] shrink-0 flex flex-col bg-[#f5f5f5]">
    <div className="h-[25px] flex items-center justify-end pr-[4px] border-b border-[#ddd]"><ChevronsLeft size={13} color="#444" /></div>
    <div className="flex-1" />
    <div className="h-[5px] flex justify-center items-center border-y border-[#ccc]"><div className="w-[19px] border-t-2 border-dotted border-[#666]" /></div>
    <div className="h-[28px] flex items-center justify-center bg-[#ecfdff] border-b border-[#c3c3cc]"><ListIcon /></div>
    <div className="h-[28px] flex items-center justify-center border-b border-[#c3c3cc]"><Calc s={26} /></div>
    <div className="h-[28px] flex items-center justify-center border-b border-[#c3c3cc]"><ProdIcon /></div>
    <div className="h-[30px]" />
  </div>
);

/* big red pointers pasted over the screenshot */
const Pointers = () => (
  <>
    <svg width="70" height="80" viewBox="0 0 70 80" className="absolute left-[1165px] top-[62px] drop-shadow-[2px_3px_2px_rgba(0,0,0,0.35)]">
      <path d="M7 8L33 18L26 25L60 60Q63 65 58 69Q53 72 50 67L17 35L11 41Z" fill="#fb3f45" />
    </svg>
    <svg width="40" height="50" viewBox="0 0 40 50" className="absolute left-[228px] top-[290px] drop-shadow-[2px_3px_2px_rgba(0,0,0,0.35)]">
      <path d="M5 4L32 23L22 25L30 38Q31 43 27 45Q24 46 22 43L15 31L8 38Z" fill="#fb3f45" />
    </svg>
  </>
);

export default function App() {
  return (
    <div className="relative w-[1544px] h-[993px] overflow-hidden flex flex-col bg-white font-['Noto_Sans',sans-serif] text-[11.5px] tracking-[-0.1px] text-[#1a1a1a]">
      <TitleBar />
      <Tabs />
      <Ribbon />
      <div className="h-[851px] shrink-0 flex">
        <LeftPanel />
        <div className="w-[4px] shrink-0 bg-[#ececec] border-l border-[#c4c4c4]" />
        <CenterColumn />
        <div className="w-[4px] shrink-0 bg-[#d4d4d4]" />
        <RightPanel />
      </div>
      <div className="h-[2px] bg-[#888]" />
      <Pointers />
    </div>
  );
}
